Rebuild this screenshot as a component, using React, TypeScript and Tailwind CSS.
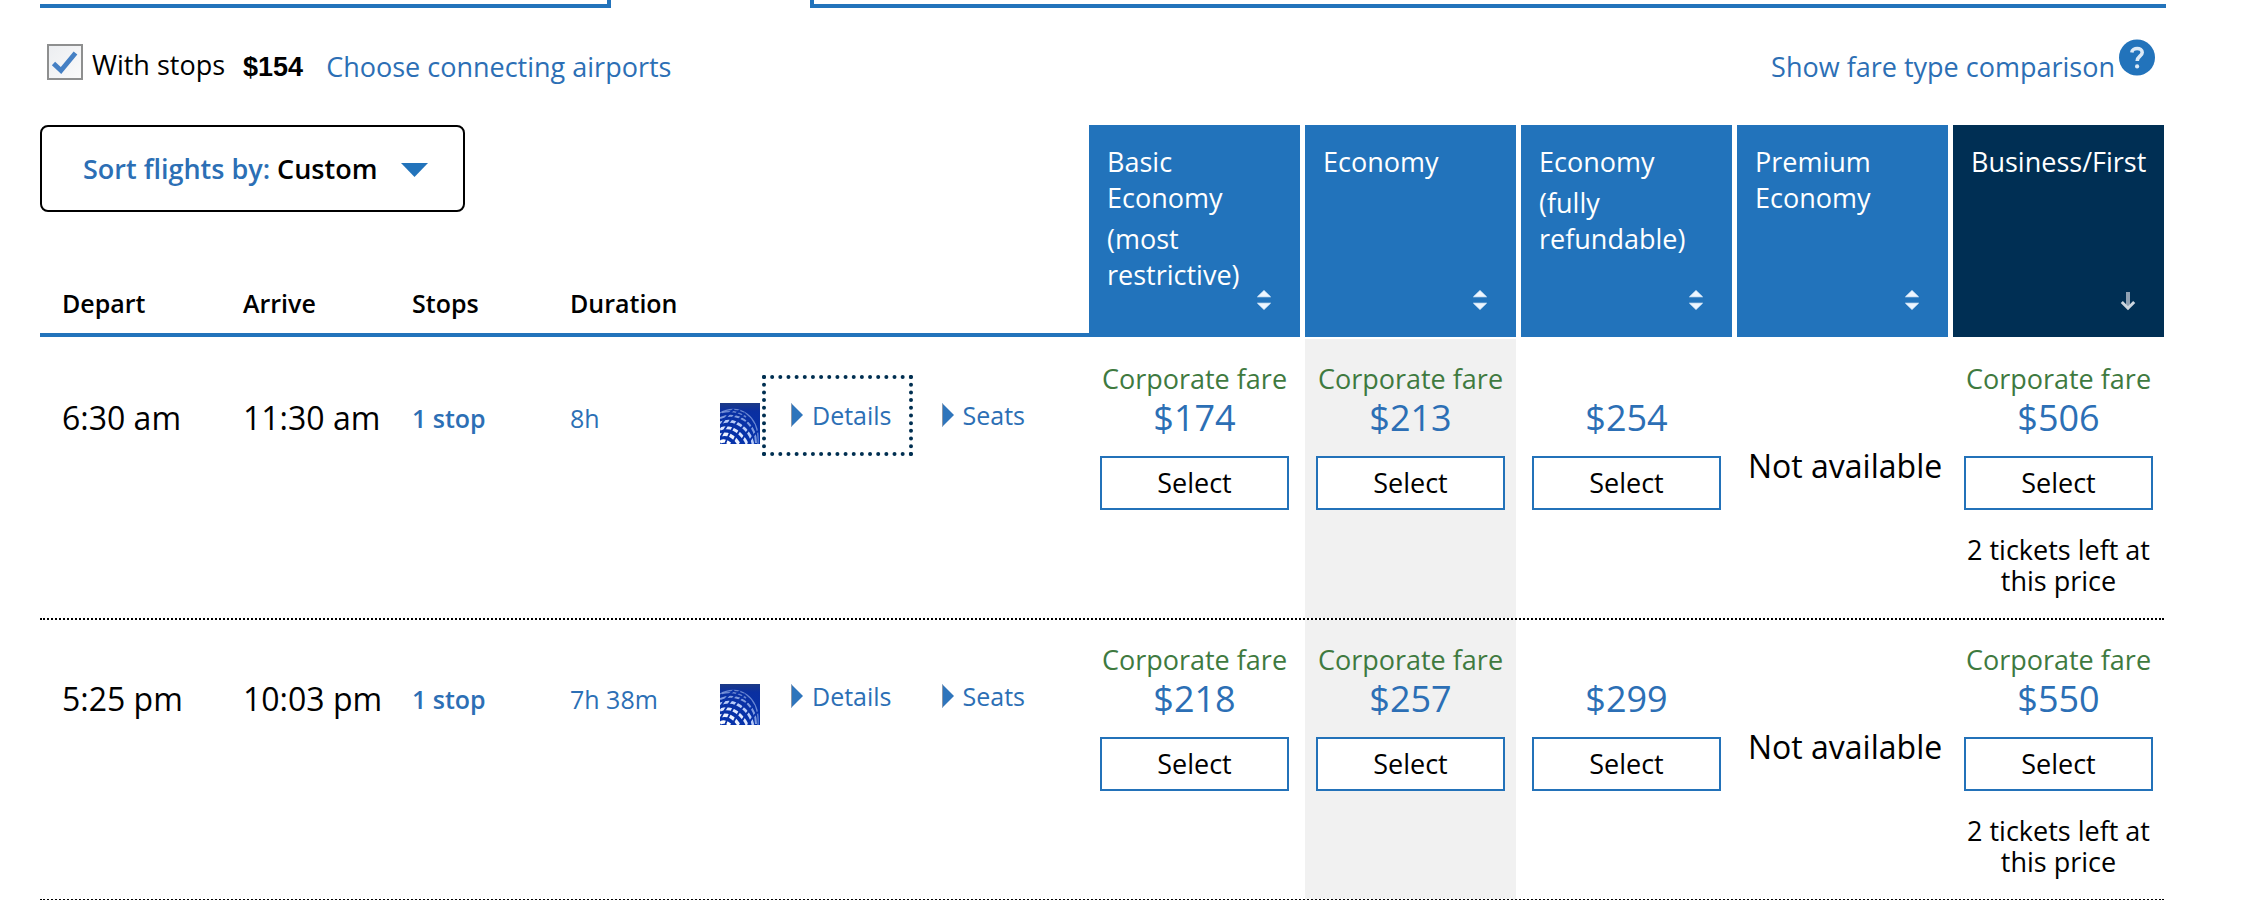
import React from "react";

type Fare = { price: string; corporate?: boolean; note?: string } | null;
type Flight = {
  depart: string;
  arrive: string;
  duration: string;
  focused?: boolean;
  fares: Fare[];
};

const flights: Flight[] = [
  {
    depart: "6:30 am",
    arrive: "11:30 am",
    duration: "8h",
    focused: true,
    fares: [
      { price: "$174", corporate: true },
      { price: "$213", corporate: true },
      { price: "$254" },
      null,
      { price: "$506", corporate: true, note: "2 tickets left at this price" },
    ],
  },
  {
    depart: "5:25 pm",
    arrive: "10:03 pm",
    duration: "7h 38m",
    fares: [
      { price: "$218", corporate: true },
      { price: "$257", corporate: true },
      { price: "$299" },
      null,
      { price: "$550", corporate: true, note: "2 tickets left at this price" },
    ],
  },
];

const cabins: { title: string; detail?: string; active?: boolean }[] = [
  { title: "Basic Economy", detail: "(most restrictive)" },
  { title: "Economy" },
  { title: "Economy", detail: "(fully refundable)" },
  { title: "Premium Economy" },
  { title: "Business/First", active: true },
];

const columns =
  "grid grid-cols-[203px_169px_158px_150px_1fr_repeat(4,216px)_211px]";

function SortArrows() {
  return (
    <svg viewBox="0 0 14 20" className="h-5 w-[14px]" aria-hidden="true">
      <path d="M7 0.5 L13.5 6.8 H0.5 Z M7 19.5 L13.5 13.2 H0.5 Z" fill="#eef6ff" stroke="#eef6ff" strokeWidth="0.8" strokeLinejoin="round" />
    </svg>
  );
}

function DownArrow() {
  return (
    <svg viewBox="0 0 16 20" className="h-5 w-4" fill="none" aria-hidden="true">
      <path d="M8 1 V16" stroke="#8fa1b3" strokeWidth="4" />
      <path d="M1.8 11 L8 17.2 L14.2 11" stroke="#ccd6df" strokeWidth="3" />
    </svg>
  );
}

function Globe() {
  return (
    <svg viewBox="0 0 40 41" className="h-[41px] w-10 shrink-0" role="img" aria-label="United Airlines">
      <defs>
        <linearGradient id="sky" x1="0" y1="0" x2="0" y2="1">
          <stop offset="0" stopColor="#1c3a86" />
          <stop offset="0.2" stopColor="#0a2fa0" />
          <stop offset="1" stopColor="#0433ad" />
        </linearGradient>
      </defs>
      <rect width="40" height="41" fill="url(#sky)" />
      <g fill="none" stroke="#a9c0f2">
        <path d="M0 10 C8 5 19 5 27 11 C35 17 39 28 38 41" strokeWidth="1.2" opacity="0.6" />
        <path d="M2 9.5 C10 7.5 19 9 26 14" strokeWidth="1.6" opacity="0.6" />
        <path d="M0 15 C10 11 20 13 28 20 C33 25 36 32 36 40" strokeWidth="2" opacity="0.75" />
        <path d="M0 20 C9 16 18 19 25 26 C30 31 32 36 33 41" strokeWidth="2.6" stroke="#b9ccf8" />
        <path d="M0 26 C8 23 15 26 20 31 C24 35 26 38 27 41" strokeWidth="3" stroke="#dfe8ff" />
        <path d="M0 32 C6 30 11 32 15 36 C17 38 18 40 19 41" strokeWidth="3.4" stroke="#eef3ff" />
        <path d="M0 39 C4 37 7 38 10 41" strokeWidth="3.4" stroke="#ffffff" />
      </g>
      <g fill="none" stroke="#0a33a8" strokeWidth="1.8">
        <path d="M-2 40 C4 26 10 15 20 7" />
        <path d="M5 41 C9 30 15 19 25 10" />
        <path d="M12 41 C16 32 21 24 30 15" />
        <path d="M20 41 C23 34 27 28 34 21" />
        <path d="M28 41 C30 37 33 32 38 28" />
        <path d="M-2 28 C2 19 7 12 14 6" />
      </g>
    </svg>
  );
}

function HelpIcon() {
  return (
    <svg viewBox="0 0 36 38" className="h-[38px] w-9" role="img" aria-label="Help">
      <circle cx="18" cy="18.5" r="18" fill="#2273bb" />
      <path d="M12.8 13.5 C13.3 8.2 23.2 8.2 23.2 13.5 C23.2 17.2 18.2 17.4 18.2 22" fill="none" stroke="#dceaf7" strokeWidth="3.6" />
      <circle cx="18.1" cy="27.4" r="2.1" fill="#dceaf7" />
    </svg>
  );
}

function Disclosure({ label, focused }: { label: string; focused?: boolean }) {
  return (
    <button
      type="button"
      className={
        focused
          ? "relative flex items-center gap-[9px] text-[25px] leading-8 text-[#2c6fb5] outline-none after:absolute after:-top-6 after:-right-[21px] after:-bottom-[25px] after:-left-[29px] after:border-4 after:border-dotted after:border-[#002f51] after:content-['']"
          : "flex items-center gap-[9px] text-[25px] leading-8 text-[#2c6fb5]"
      }
    >
      <svg viewBox="0 0 12 24" className="h-6 w-3" aria-hidden="true">
        <path d="M0 0 L12 12 L0 24 Z" fill="#2e75bc" />
        <path d="M0.5 1 V23" stroke="#8d97a8" strokeWidth="1" />
      </svg>
      {label}
    </button>
  );
}

function FareCell({ fare, shaded, last }: { fare: Fare; shaded: boolean; last: boolean }) {
  return (
    <td className={last ? "flex" : "flex pr-[5px]"}>
      <div
        className={
          shaded
            ? "flex flex-1 flex-col items-center bg-[#f1f1f1] px-[11px] pt-6 text-center"
            : "flex flex-1 flex-col items-center px-[11px] pt-6 text-center"
        }
      >
        {fare ? (
          <>
            <span className="h-8 text-[27px] leading-8 whitespace-nowrap text-[#3f7a3f]">
              {fare.corporate ? "Corporate fare" : ""}
            </span>
            <a href="#fare" className="text-4xl leading-[46px] text-[#2c6fb5]">
              {fare.price}
            </a>
            <button
              type="button"
              className="mt-[15px] h-[54px] w-full border-2 border-[#2372b9] bg-white text-[27px] leading-8 text-black"
            >
              Select
            </button>
            {fare.note && (
              <p className="-mx-2 mt-6 px-2 text-[27px] leading-[31px]">{fare.note}</p>
            )}
          </>
        ) : (
          <span className="mt-[83px] text-[32px] leading-10 whitespace-nowrap">Not available</span>
        )}
      </div>
    </td>
  );
}

export default function App() {
  return (
    <main className="max-h-screen overflow-hidden bg-white pr-[97px] pl-10 font-['Open_Sans','Noto_Sans',sans-serif] text-black">
      <div className="flex gap-[199px]">
        <div className="h-2 w-[571px] border-r-4 border-b-4 border-[#2273bb]" />
        <div className="h-2 flex-1 border-b-4 border-l-4 border-[#2273bb]" />
      </div>

      <div className="flex h-[117px] items-start pt-[31px] pr-[11px] pl-[7px]">
        <label className="flex items-start gap-[9px] text-[27px] leading-[52px]">
          <span className="relative mt-[5px] flex size-9">
            <input
              type="checkbox"
              defaultChecked
              className="size-9 appearance-none border-2 border-[#8e8f8f] bg-linear-to-br from-[#eceef1] to-[#fafafa]"
            />
            <svg viewBox="0 0 36 36" className="pointer-events-none absolute inset-0" fill="none" aria-hidden="true">
              <path d="M6.5 19.5 L14 26.5 L28.5 9" stroke="#4580c4" strokeWidth="4.8" />
            </svg>
          </span>
          With stops
        </label>
        <strong className="ml-[18px] font-['Liberation_Sans',Arial,sans-serif] text-[27px] leading-[56px] font-bold">
          $154
        </strong>
        <a href="#airports" className="ml-[23px] text-[27px] leading-[56px] text-[#2c6fb5]">
          Choose connecting airports
        </a>
        <a href="#compare" className="ml-auto flex items-start gap-1 text-[27px] leading-[56px] text-[#2c6fb5]">
          Show fare type comparison
          <HelpIcon />
        </a>
      </div>

      <table className="mr-[2px] block">
        <thead className="block">
          <tr className={`${columns} min-h-[212px] grid-rows-[auto_1fr]`}>
            <td className="col-span-5 row-start-1">
              <button
                type="button"
                className="flex h-[87px] w-[425px] items-center rounded-lg border-2 border-black pt-[2px] pl-[41px] text-[27px] font-semibold"
              >
                <span className="text-[#2c6fb5]">Sort flights by:</span>
                <span className="ml-[7px]">Custom</span>
                <svg viewBox="0 0 27 14" className="ml-6 h-[14px] w-[27px]" aria-hidden="true">
                  <path d="M0 0 H27 L13.5 14 Z" fill="#2273bb" />
                </svg>
              </button>
            </td>
            {["Depart", "Arrive", "Stops", "Duration", ""].map((name, i) => (
              <th
                key={i}
                scope="col"
                className={
                  i === 0
                    ? "row-start-2 flex items-end border-b-4 border-[#2273bb] pb-[10px] pl-[22px] text-left text-[25px] leading-10 font-semibold"
                    : "row-start-2 flex items-end border-b-4 border-[#2273bb] pb-[10px] text-left text-[25px] leading-10 font-semibold"
                }
              >
                {name}
              </th>
            ))}
            {cabins.map((cabin, i) => (
              <th
                key={i}
                scope="col"
                className={i === 4 ? "row-span-2 row-start-1 flex" : "row-span-2 row-start-1 flex pr-[5px]"}
              >
                <div
                  className={
                    cabin.active
                      ? "relative flex-1 bg-[#002f54] pt-[19px] pl-[18px] text-left text-[27px] leading-9 font-normal text-white"
                      : "relative flex-1 bg-[#2273bb] pt-[19px] pr-10 pl-[18px] text-left text-[27px] leading-9 font-normal text-white"
                  }
                >
                  <div>{cabin.title}</div>
                  {cabin.detail && <div className="mt-[5px]">{cabin.detail}</div>}
                  <span
                    className={
                      cabin.active
                        ? "absolute right-7 bottom-[26px] flex"
                        : "absolute right-[29px] bottom-[27px] flex"
                    }
                  >
                    {cabin.active ? <DownArrow /> : <SortArrows />}
                  </span>
                </div>
              </th>
            ))}
          </tr>
        </thead>
        <tbody className="block pt-[2px]">
          {flights.map((flight) => (
            <tr key={flight.depart} className={`${columns} h-[281px] border-b-2 border-dotted border-black`}>
              <td className="pt-[57px] pl-[22px] text-[32px] leading-11">{flight.depart}</td>
              <td className="pt-[57px] text-[32px] leading-11 whitespace-nowrap">{flight.arrive}</td>
              <td className="pt-[57px] text-[25px] leading-11">
                <a href="#stops" className="font-semibold text-[#2c6fb5]">1 stop</a>
              </td>
              <td className="pt-[57px] text-[25px] leading-11">
                <a href="#duration" className="text-[#2c6fb5]">{flight.duration}</a>
              </td>
              <td className="flex items-start pt-[60px]">
                <div className="mt-1 mr-[31px]">
                  <Globe />
                </div>
                <Disclosure label="Details" focused={flight.focused} />
                <div className="ml-[50px]">
                  <Disclosure label="Seats" />
                </div>
              </td>
              {flight.fares.map((fare, i) => (
                <FareCell key={i} fare={fare} shaded={i === 1} last={i === 4} />
              ))}
            </tr>
          ))}
        </tbody>
      </table>
    </main>
  );
}
